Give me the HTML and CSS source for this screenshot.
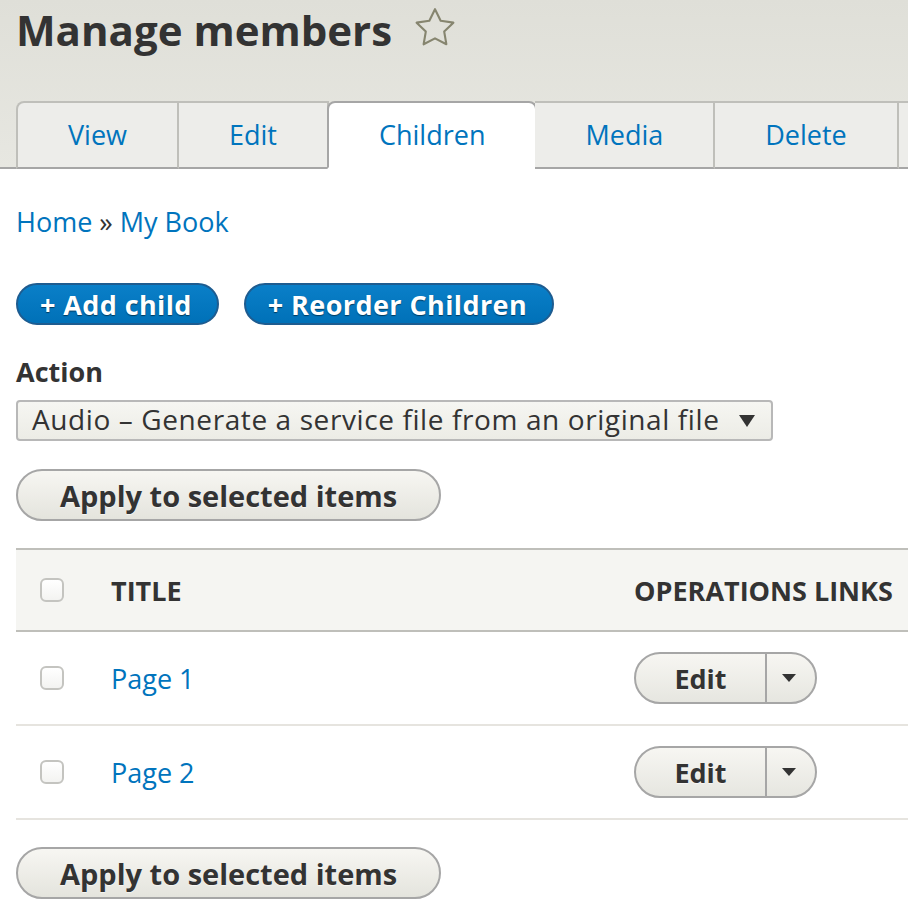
FILE: index.html
```html
<!DOCTYPE html>
<html lang="en">
<head>
<meta charset="utf-8">
<title>Manage members</title>
<link rel="stylesheet" href="styles.css">
</head>
<body>
<header class="page-header">
  <h1 class="page-title">Manage members
    <svg class="star" viewBox="0 0 24 24" width="46" height="46" aria-hidden="true"><path d="M12 2.2l2.95 6.05 6.65.95-4.8 4.68 1.13 6.62L12 17.38 6.07 20.5l1.13-6.62L2.4 9.2l6.65-.95z" fill="none" stroke="#86856f" stroke-width="1.1" stroke-linejoin="round"/></svg>
  </h1>
  <nav class="tabs">
    <a class="tab tab-first" href="#">View</a>
    <a class="tab" href="#">Edit</a>
    <a class="tab tab-active" href="#">Children</a>
    <a class="tab" href="#">Media</a>
    <a class="tab" href="#">Delete</a>
    <span class="tab tab-more" aria-hidden="true"></span>
  </nav>
</header>
<main class="content">
  <nav class="breadcrumb"><a href="#">Home</a> » <a href="#">My Book</a></nav>
  <div class="actions">
    <a class="btn btn-primary" href="#">+ Add child</a>
    <a class="btn btn-primary" href="#">+ Reorder Children</a>
  </div>
  <form class="bulk-form">
    <label class="field-label">Action</label>
    <div class="select"><span class="select-value">Audio – Generate a service file from an original file</span><span class="caret"></span></div>
    <button class="btn btn-secondary btn-apply" type="button">Apply to selected items</button>
    <table class="members">
      <thead>
        <tr>
          <th class="col-check"><span class="checkbox"></span></th>
          <th class="col-title">Title</th>
          <th class="col-ops">Operations links</th>
        </tr>
      </thead>
      <tbody>
        <tr>
          <td class="col-check"><span class="checkbox"></span></td>
          <td class="col-title"><a href="#">Page 1</a></td>
          <td class="col-ops"><span class="dropbutton"><span class="drop-main">Edit</span><span class="drop-toggle"><span class="drop-caret"></span></span></span></td>
        </tr>
        <tr>
          <td class="col-check"><span class="checkbox"></span></td>
          <td class="col-title"><a href="#">Page 2</a></td>
          <td class="col-ops"><span class="dropbutton"><span class="drop-main">Edit</span><span class="drop-toggle"><span class="drop-caret"></span></span></span></td>
        </tr>
      </tbody>
    </table>
    <button class="btn btn-secondary btn-apply-bottom" type="button">Apply to selected items</button>
  </form>
</main>
</body>
</html>
```

FILE: styles.css
```css
html, body {
  margin: 0;
  padding: 0;
  overflow: hidden;
  background: #fff;
}
body {
  font-family: "Open Sans", "DejaVu Sans", sans-serif;
  font-size: 27px;
  color: #333;
}
a {
  color: #0074bd;
  text-decoration: none;
}

/* Header */
.page-header {
  background: linear-gradient(#dfdfd8, #e7e7e1);
  padding-left: 16px;
  border-bottom: 2px solid #a6a6a6;
}
.page-title {
  margin: 0;
  height: 60px;
  display: flex;
  align-items: center;
  gap: 20px;
  font-size: 42px;
  font-weight: 700;
  color: #333;
  line-height: 60px;
}
.star {
  display: block;
  margin-top: -4px;
}

/* Tabs */
.tabs {
  display: flex;
  flex-wrap: nowrap;
  overflow: hidden;
  margin-top: 41px;
  margin-bottom: -2px;
}
.tab {
  flex: none;
  box-sizing: border-box;
  height: 68px;
  line-height: 64px;
  padding: 0 50px;
  background: #ededea;
  border-top: 2px solid #bfbfba;
  border-right: 2px solid #bfbfba;
  border-bottom: 2px solid #a6a6a6;
  color: #0074bd;
}
.tab-first {
  border-left: 2px solid #bfbfba;
  border-top-left-radius: 8px;
}
.tab-active {
  background: #fff;
  border: 2px solid #a6a6a6;
  border-bottom-color: #fff;
  border-radius: 8px 8px 0 0;
  margin-left: -2px;
}
.tab-active + .tab {
  margin-left: -2px;
}
.tab-more {
  width: 120px;
}

/* Content */
.content {
  padding: 0 0 0 16px;
}
.breadcrumb {
  margin-top: 35px;
  line-height: 36px;
}
.actions {
  display: flex;
  gap: 25px;
  margin-top: 43px;
}
.btn {
  box-sizing: border-box;
  display: inline-flex;
  align-items: center;
  justify-content: center;
  border-radius: 40px;
  font-family: inherit;
  font-weight: 700;
  cursor: pointer;
}
.btn-primary {
  height: 42px;
  padding: 0 25px 0 22px;
  background: linear-gradient(#0a7fc8, #0071b8);
  border: 2px solid #1e5c90;
  color: #fff;
  font-size: 27px;
  letter-spacing: 0.4px;
  text-shadow: 0 1px 1px rgba(0, 0, 0, 0.5);
}
.btn-secondary {
  height: 52px;
  padding: 0 42px;
  background: linear-gradient(#f7f6f2, #e4e4dd);
  border: 2px solid #a6a6a6;
  color: #333;
  font-size: 29px;
  text-shadow: 0 1px 1px rgba(255, 255, 255, 0.6);
}

.bulk-form {
  margin: 0;
  display: flex;
  flex-direction: column;
  align-items: flex-start;
}
.field-label {
  margin-top: 32px;
  line-height: 30px;
  font-weight: 700;
}
.select {
  box-sizing: border-box;
  margin-top: 13px;
  width: 757px;
  height: 41px;
  padding: 0 16px 3px 14px;
  display: flex;
  align-items: center;
  justify-content: space-between;
  background: linear-gradient(#f6f6f2, #ececE6);
  border: 2px solid #b8b8b8;
  border-radius: 4px;
  line-height: 36px;
}
.select-value {
  font-size: 28px;
  letter-spacing: 0.6px;
  white-space: nowrap;
}
.caret {
  width: 0;
  height: 0;
  margin-top: 3px;
  border-left: 8px solid transparent;
  border-right: 8px solid transparent;
  border-top: 12px solid #333;
}
.btn-apply {
  margin-top: 28px;
}

/* Table */
.members {
  margin-top: 27px;
  width: 892px;
  border-collapse: collapse;
  table-layout: fixed;
}
.members thead tr {
  background: #f5f5f2;
  border-top: 2px solid #bfbfba;
  border-bottom: 2px solid #bfbfba;
}
.members th {
  height: 80px;
  padding: 0 0 0 24px;
  text-align: left;
  text-transform: uppercase;
  font-weight: 700;
  color: #333;
  vertical-align: middle;
}
.members tbody tr {
  border-bottom: 2px solid #e6e4df;
}
.members td {
  height: 92px;
  padding: 0 0 0 24px;
  vertical-align: middle;
}
.col-check {
  width: 47px;
}
.members .col-ops {
  width: 274px;
  white-space: nowrap;
}
.checkbox {
  display: block;
  box-sizing: border-box;
  width: 24px;
  height: 24px;
  border: 2px solid #c4c4c0;
  border-radius: 6px;
  background: linear-gradient(#fff, #f3f3f1);
}

/* Dropbutton */
.dropbutton {
  box-sizing: border-box;
  display: inline-flex;
  height: 52px;
  width: 183px;
  border: 2px solid #a6a6a6;
  border-radius: 40px;
  background: linear-gradient(#f7f6f2, #e6e6e0);
  overflow: hidden;
  vertical-align: middle;
}
.drop-main {
  width: 129px;
  display: flex;
  align-items: center;
  justify-content: center;
  font-weight: 700;
  color: #333;
  text-shadow: 0 1px 1px rgba(255, 255, 255, 0.6);
}
.drop-toggle {
  flex: 1;
  display: flex;
  align-items: center;
  justify-content: center;
  border-left: 2px solid #a6a6a6;
  padding-right: 4px;
}
.drop-caret {
  width: 0;
  height: 0;
  border-left: 7px solid transparent;
  border-right: 7px solid transparent;
  border-top: 8px solid #333;
}
.btn-apply-bottom {
  margin-top: 27px;
}
```
